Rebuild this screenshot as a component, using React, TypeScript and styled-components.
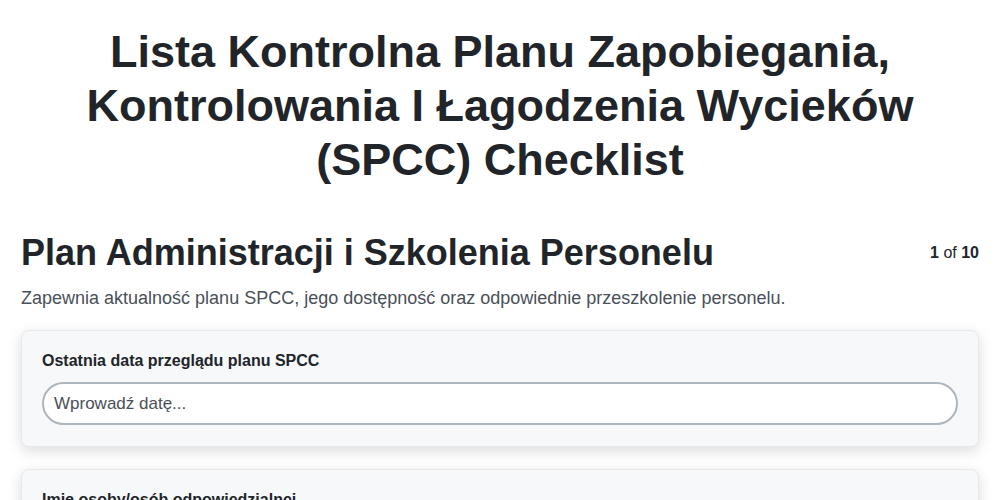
import React from "react";
import styled, { createGlobalStyle } from "styled-components";

const GlobalStyle = createGlobalStyle`
  html, body {
    margin: 0;
    padding: 0;
    background: #ffffff;
  }
  body {
    font-family: "Liberation Sans", Arial, sans-serif;
    color: #212529;
  }
  * {
    box-sizing: border-box;
  }
`;

const fields = [
  { label: "Ostatnia data przeglądu planu SPCC", placeholder: "Wprowadź datę..." },
  { label: "Imię osoby/osób odpowiedzialnej", placeholder: "Wprowadź imię i nazwisko..." },
];

export default function App() {
  return (
    <>
      <GlobalStyle />
      <Page>
        <Title>
          Lista Kontrolna Planu Zapobiegania, Kontrolowania I Łagodzenia Wycieków (SPCC) Checklist
        </Title>
        <SectionHeader>
          <SectionTitle>Plan Administracji i Szkolenia Personelu</SectionTitle>
          <Progress>
            <b>1</b> of <b>10</b>
          </Progress>
        </SectionHeader>
        <SectionDescription>
          Zapewnia aktualność planu SPCC, jego dostępność oraz odpowiednie przeszkolenie personelu.
        </SectionDescription>
        <FieldList>
          {fields.map((f) => (
            <FieldCard key={f.label}>
              <FieldLabel>{f.label}</FieldLabel>
              <TextInput type="text" placeholder={f.placeholder} />
            </FieldCard>
          ))}
        </FieldList>
      </Page>
    </>
  );
}

const Page = styled.div`
  padding: 25px 21px 40px;
`;

const Title = styled.h1`
  margin: 0 0 45px;
  font-size: 45px;
  line-height: 54px;
  font-weight: 700;
  text-align: center;
  color: #212529;
`;

const SectionHeader = styled.div`
  display: flex;
  justify-content: space-between;
  align-items: center;
`;

const SectionTitle = styled.h2`
  margin: 0;
  font-size: 36px;
  line-height: 42px;
  font-weight: 700;
  color: #212529;
`;

const Progress = styled.div`
  font-size: 16px;
  color: #212529;
`;

const SectionDescription = styled.p`
  margin: 12px 0 20px;
  font-size: 18px;
  line-height: 24px;
  color: #495057;
`;

const FieldList = styled.div`
  display: flex;
  flex-direction: column;
  gap: 22px;
`;

const FieldCard = styled.div`
  background: #f7f8fa;
  border: 1px solid #e6e8eb;
  border-radius: 8px;
  padding: 20px 20px 21px;
  box-shadow: 0 4px 14px rgba(0, 0, 0, 0.14);
`;

const FieldLabel = styled.label`
  display: block;
  font-size: 16px;
  font-weight: 700;
  line-height: 20px;
  margin-bottom: 11px;
  color: #212529;
`;

const TextInput = styled.input`
  display: block;
  width: 100%;
  height: 43px;
  padding: 0 10px;
  border: 2px solid #adb5bd;
  border-radius: 22px;
  background: #ffffff;
  font-family: "Liberation Sans", Arial, sans-serif;
  font-size: 17px;
  color: #212529;
  outline: none;

  &::placeholder {
    color: #495057;
  }
`;
